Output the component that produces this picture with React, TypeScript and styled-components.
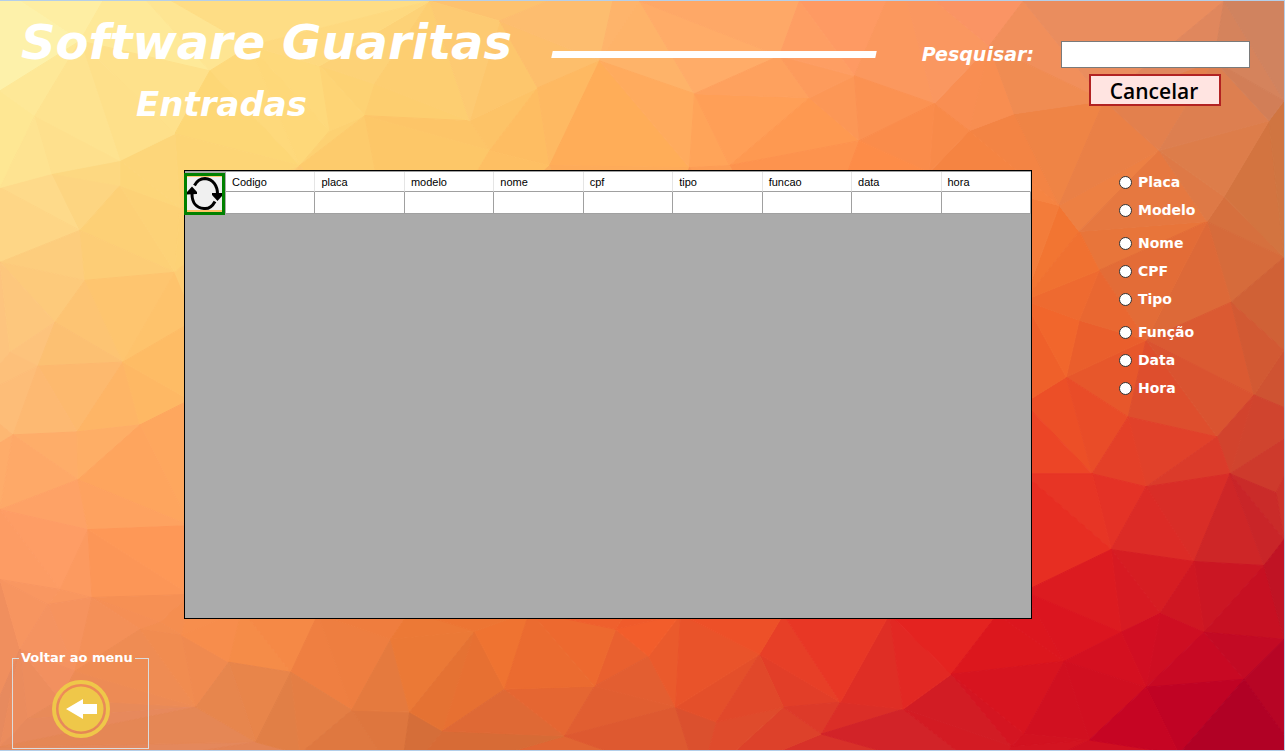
import React, { useMemo } from "react";
import styled, { createGlobalStyle } from "styled-components";

type Point = [number, number];
type Swatch = [number, number, string];

const GlobalStyle = createGlobalStyle`
  *, *::before, *::after { box-sizing: border-box; }
  html, body { margin: 0; padding: 0; }
  body { font-family: "DejaVu Sans", Verdana, sans-serif; color: #fff; }
`;

/* ---------- low-poly wallpaper ---------- */

const ART_W = 1285;
const ART_H = 751;

const vertices: Point[] = [
  [-40, -40], [1325, -40], [1325, 791], [-40, 791], [120, -30], [620, -30], [900, -30], [-30, 400], [1315, 420], [400, 785], [700, 785], [1000, 785],
  [0, 90], [0, 187], [52, 173], [120, 185], [80, 230], [0, 262], [180, 207], [85, 280], [55, 322], [10, 352], [38, 366], [123, 362], [175, 272],
  [13, 435], [77, 432], [0, 443], [140, 425], [190, 400], [78, 480], [88, 530], [0, 510], [0, 580], [60, 590], [48, 605], [92, 598], [190, 526],
  [190, 595], [160, 623], [20, 650], [140, 630], [195, 320], [27, 720], [60, 700], [75, 672], [0, 748],
  [182, 636], [229, 663], [291, 673], [196, 708], [242, 610], [318, 615], [256, 743], [352, 711], [300, 755], [391, 640], [410, 713], [443, 732],
  [475, 632], [505, 690], [616, 630], [595, 687], [565, 737], [649, 657], [676, 708], [760, 655], [784, 708], [841, 703], [822, 735], [904, 710],
  [952, 675], [1012, 747], [717, 723], [784, 615], [890, 615], [681, 615], [998, 615], [530, 612], [410, 612],
  [1060, 205], [1080, 231], [1208, 221], [1225, 196], [1285, 257], [1232, 302], [1067, 377], [1025, 403], [1129, 417], [1147, 340], [1255, 395],
  [1218, 437], [1285, 350], [1093, 474], [1147, 487], [1231, 474], [1277, 493], [1025, 474], [1112, 550], [1195, 562], [1265, 566], [1161, 614],
  [1205, 633], [1122, 633], [1065, 662], [1025, 592], [1147, 688], [1285, 540], [1245, 680], [1285, 640], [1180, 755], [1090, 741], [1025, 735],
  [1080, 320], [1025, 300], [1100, 270],
  [80, 40], [210, 70], [320, 65], [375, 83], [250, 45], [300, 165], [365, 115], [470, 120], [538, 87], [550, 165], [490, 150], [330, 130],
  [175, 133], [35, 115], [120, 160], [500, 20], [430, 0], [640, 0], [600, 60], [695, 93], [690, 167], [730, 165], [810, 97], [860, 140],
  [780, 55], [800, 0], [855, 75], [970, 130], [935, 103], [1015, 113], [1024, 0], [990, 45], [1105, 100], [1160, 150], [1215, 60], [1285, 100],
  [1225, 0], [1270, 120], [930, 172], [400, 300], [600, 400], [800, 300], [700, 500], [350, 480], [900, 450],
];

const swatches: Swatch[] = [
  [10, 15, "#fdf3ae"], [60, 60, "#fee998"], [100, 15, "#feee9f"], [200, 20, "#fee795"], [20, 130, "#fee893"], [120, 100, "#fee08a"],
  [200, 60, "#fee08a"], [300, 30, "#fedc82"], [300, 100, "#fed97a"], [250, 140, "#fdd572"], [400, 20, "#fdd37c"], [400, 90, "#fdd070"],
  [380, 140, "#fdc968"], [480, 50, "#fdcb73"], [480, 140, "#fec062"], [500, 100, "#fdc569"], [560, 20, "#fdbf70"], [580, 100, "#feba62"],
  [620, 60, "#feb568"], [570, 150, "#ffb358"], [640, 20, "#feb36c"], [630, 150, "#ffa552"], [700, 20, "#ffae6c"], [700, 120, "#ffa458"],
  [680, 60, "#ffb06a"], [740, 60, "#fea564"], [800, 40, "#fe9f64"], [780, 120, "#ff9a50"], [850, 20, "#fe9a64"], [850, 90, "#fb9858"],
  [850, 155, "#ff8c45"], [920, 40, "#fa9a60"], [920, 120, "#fa8c4a"], [980, 30, "#fb9468"], [980, 90, "#f98f52"], [980, 150, "#f58340"],
  [1050, 20, "#ef9160"], [1060, 90, "#ef8c52"], [1060, 150, "#ee8444"], [1130, 30, "#ea8e60"], [1130, 120, "#e67e48"], [1200, 40, "#df8860"],
  [1200, 110, "#de8050"], [1270, 40, "#cf8460"], [1270, 90, "#d07e58"], [1200, 160, "#e07f4b"], [1270, 160, "#cf7440"],
  [1045, 190, "#f5843f"], [1045, 260, "#f4742e"], [1100, 200, "#ee8145"], [1130, 240, "#e87539"], [1230, 230, "#d66e3e"], [1265, 210, "#d2743f"],
  [1190, 260, "#de6d3a"], [1050, 330, "#f4682c"], [1100, 300, "#ea6931"], [1160, 330, "#e26433"], [1200, 350, "#dd5a32"], [1265, 300, "#cf6236"],
  [1265, 370, "#cb5733"], [1240, 360, "#d75a33"], [1045, 380, "#ef5f29"], [1100, 360, "#e95b2b"], [1170, 400, "#dc4f2d"], [1070, 420, "#ec4f27"],
  [1160, 440, "#e3432b"], [1110, 430, "#e84b28"], [1260, 430, "#d0452e"], [1040, 450, "#ee4425"], [1150, 470, "#e13a29"], [1260, 470, "#cd392c"],
  [1060, 510, "#e83525"], [1040, 530, "#e92d20"], [1120, 500, "#e53126"], [1170, 520, "#dc2b26"], [1230, 520, "#d02627"], [1270, 520, "#c62628"],
  [1090, 590, "#dd1b20"], [1050, 620, "#dc141e"], [1150, 580, "#d71d22"], [1190, 600, "#cf1822"], [1230, 620, "#c80f21"], [1275, 570, "#bd1024"],
  [1100, 650, "#d5101f"], [1150, 650, "#d00b22"], [1220, 660, "#c80724"], [1045, 650, "#de171d"], [1060, 700, "#cf0e20"], [1160, 710, "#c40224"],
  [1250, 730, "#ae0025"], [1270, 670, "#b80525"], [1200, 730, "#bb0024"],
  [20, 180, "#fee493"], [30, 215, "#fed888"], [150, 190, "#fdd678"], [60, 240, "#fdcd7d"], [130, 240, "#fdd075"], [30, 280, "#fdcb7c"],
  [90, 310, "#fdc775"], [140, 310, "#fec46c"], [20, 340, "#fdc581"], [80, 345, "#fcbf70"], [25, 390, "#fdbf7a"], [70, 400, "#fdb86e"],
  [130, 400, "#feb763"], [160, 370, "#febc64"], [110, 440, "#feae66"], [40, 460, "#feaa68"], [150, 470, "#ffa25b"], [40, 530, "#ff9f68"],
  [100, 500, "#fea462"], [60, 560, "#fe9b62"], [140, 560, "#ff9856"], [30, 620, "#f79560"], [130, 615, "#f58f55"], [40, 700, "#ec8c5c"],
  [100, 740, "#e0865c"], [20, 740, "#e5895f"], [170, 640, "#f28d50"], [130, 690, "#ee8b52"], [175, 720, "#e38856"], [60, 660, "#f69262"],
  [205, 630, "#fa8e4b"], [190, 680, "#ef8a50"], [260, 640, "#f78d47"], [240, 710, "#e6854a"], [195, 740, "#df8055"], [330, 640, "#f8803e"],
  [290, 730, "#df7d45"], [340, 670, "#eb7e42"], [430, 650, "#ed7a35"], [390, 690, "#e57a3e"], [370, 730, "#dd7740"], [460, 700, "#e8702f"],
  [440, 742, "#cd6938"], [510, 640, "#f17431"], [520, 720, "#dc6836"], [570, 650, "#ee6a2e"], [560, 700, "#e76632"], [640, 690, "#e15f33"],
  [620, 730, "#de5c30"], [650, 630, "#f55e2a"], [720, 635, "#f05428"], [710, 680, "#e6522a"], [690, 740, "#d9502f"], [750, 700, "#e0482a"],
  [800, 680, "#e33d28"], [800, 630, "#ee4024"], [850, 640, "#e93524"], [800, 730, "#d93b2a"], [870, 700, "#dc2e26"], [910, 640, "#e82c22"],
  [950, 640, "#e52220"], [890, 740, "#d0222a"], [950, 715, "#cf1d25"], [1000, 650, "#dd161c"], [990, 700, "#d41220"],
];

const palette = swatches.map(([x, y, hex]) => ({
  x,
  y,
  rgb: [1, 3, 5].map((i) => parseInt(hex.slice(i, i + 2), 16)),
}));

function colorAt(x: number, y: number): string {
  let total = 0;
  const sum = [0, 0, 0];
  for (const s of palette) {
    const d2 = (s.x - x) ** 2 + (s.y - y) ** 2 + 1200;
    const w = 1 / (d2 * d2);
    total += w;
    s.rgb.forEach((c, i) => (sum[i] += c * w));
  }
  return `rgb(${sum.map((c) => Math.round(c / total)).join(",")})`;
}

/* Bowyer-Watson triangulation of the wallpaper's vertices. */
function triangulate(source: Point[]): Point[][] {
  const pts: Point[] = [...source, [-9000, -9000], [9000, -9000], [0, 12000]];
  const n = source.length;
  const circle = (a: number, b: number, c: number) => {
    const [ax, ay] = pts[a];
    const [bx, by] = pts[b];
    const [cx, cy] = pts[c];
    const d = 2 * (ax * (by - cy) + bx * (cy - ay) + cx * (ay - by));
    const a2 = ax * ax + ay * ay;
    const b2 = bx * bx + by * by;
    const c2 = cx * cx + cy * cy;
    const x = (a2 * (by - cy) + b2 * (cy - ay) + c2 * (ay - by)) / d;
    const y = (a2 * (cx - bx) + b2 * (ax - cx) + c2 * (bx - ax)) / d;
    return { v: [a, b, c], x, y, r: (ax - x) ** 2 + (ay - y) ** 2 };
  };
  let tris = [circle(n, n + 1, n + 2)];
  for (let i = 0; i < n; i++) {
    const [px, py] = pts[i];
    const edges = new Map<string, number[]>();
    tris = tris.filter((t) => {
      if ((px - t.x) ** 2 + (py - t.y) ** 2 >= t.r) return true;
      [[0, 1], [1, 2], [2, 0]].forEach(([p, q]) => {
        const e = [t.v[p], t.v[q]].sort((m, k) => m - k);
        const key = e.join("-");
        if (edges.has(key)) edges.delete(key);
        else edges.set(key, e);
      });
      return false;
    });
    edges.forEach(([a, b]) => tris.push(circle(a, b, i)));
  }
  return tris.filter((t) => t.v.every((k) => k < n)).map((t) => t.v.map((k) => pts[k]));
}

const Art = styled.svg`
  position: absolute;
  inset: 0;
  width: 100%;
  height: 100%;
  z-index: -1;
`;

function Wallpaper() {
  const facets = useMemo(
    () =>
      triangulate(vertices).map((t) => ({
        points: t.map((p) => p.join(",")).join(" "),
        fill: colorAt((t[0][0] + t[1][0] + t[2][0]) / 3, (t[0][1] + t[1][1] + t[2][1]) / 3),
      })),
    []
  );
  return (
    <Art viewBox={`0 0 ${ART_W} ${ART_H}`} preserveAspectRatio="none" aria-hidden="true">
      {facets.map((f) => (
        <polygon key={f.points} points={f.points} fill={f.fill} stroke={f.fill} strokeWidth={1} />
      ))}
    </Art>
  );
}

/* ---------- window ---------- */

const Window = styled.div`
  position: relative;
  isolation: isolate;
  display: flex;
  flex-direction: column;
  min-height: 100vh;
  overflow: hidden;
  border: 1px solid #b4cfea;
  border-left: 0;
`;

const Header = styled.header`
  display: flex;
  align-items: flex-start;
  height: 169px;
  padding: 13px 34px 0 21px;
`;

const Title = styled.h1`
  margin: 0;
  font-size: 48px;
  line-height: 56px;
  font-style: italic;
  font-weight: 700;
  white-space: nowrap;
`;

const Subtitle = styled.h2`
  margin: 14px 0 0 115px;
  font-size: 34px;
  line-height: 40px;
  font-style: italic;
  font-weight: 700;
`;

const Rule = styled.div`
  flex: 1;
  height: 7px;
  margin: 37px 46px 0 40px;
  background: #fff;
  transform: skewX(-12deg);
`;

const Search = styled.form`
  display: grid;
  grid-template-columns: auto 189px;
  column-gap: 27px;
  row-gap: 6px;
  align-items: center;
  padding-top: 27px;
`;

const SearchLabel = styled.label`
  padding-bottom: 2px;
  font-size: 19px;
  line-height: 24px;
  font-style: italic;
  font-weight: 700;
`;

const SearchInput = styled.input`
  width: 100%;
  height: 27px;
  padding: 2px 4px;
  border: 1px solid #7a7a7a;
  border-radius: 0;
  background: #fff;
  font: 16px "DejaVu Sans", sans-serif;
`;

const CancelButton = styled.button`
  grid-column: 2;
  width: 132px;
  height: 32px;
  margin-left: 28px;
  padding: 2px 2px 0 0;
  border: 2px solid #b22222;
  background: #ffe4e1;
  color: #000;
  font: 600 21px/24px "Open Sans", sans-serif;
`;

const Main = styled.main`
  flex: 1;
  display: flex;
  padding-left: 184px;
`;

const Grid = styled.section`
  flex: 1;
  min-height: 440px;
  border: 1px solid #000;
  background: #ababab;
`;

const Table = styled.table`
  width: 100%;
  table-layout: fixed;
  border-collapse: separate;
  border-spacing: 0;
  border-top: 1px solid #a0a0a0;
  color: #000;
  font: 11px/14px "Liberation Sans", Arial, sans-serif;
`;

const CornerCell = styled.td`
  position: relative;
  width: 41px;
  padding: 0;
`;

const HeadCell = styled.th`
  height: 20px;
  padding: 0 6px;
  border-right: 1px solid #e5e5e5;
  border-bottom: 1px solid #a0a0a0;
  background: #fff;
  font-weight: 400;
  text-align: left;
`;

const Cell = styled.td`
  height: 22px;
  padding: 0;
  border-right: 1px solid #a0a0a0;
  border-bottom: 1px solid #a0a0a0;
  background: #fff;
`;

const RefreshButton = styled.button`
  position: absolute;
  top: 1px;
  left: -1px;
  width: 41px;
  height: 42px;
  padding: 0;
  border: 3px solid #008000;
  background: linear-gradient(#fdcb72 1px, #f0f0f0 1px, #f0f0f0 34px, #fdc566 34px);

  svg { display: block; width: 35px; height: 36px; }
`;

const Filters = styled.aside`
  display: flex;
  flex-direction: column;
  gap: 9px;
  width: 252px;
  padding-left: 87px;
`;

const FilterGroup = styled.div`
  display: flex;
  flex-direction: column;
  align-items: flex-start;
  gap: 4px;
`;

const FilterOption = styled.label`
  display: flex;
  align-items: center;
  gap: 6px;
  font-size: 14px;
  line-height: 24px;
  font-weight: 700;

  input {
    appearance: none;
    width: 13px;
    height: 13px;
    margin: 0;
    border: 1px solid #333;
    border-radius: 50%;
    background: #fff;
  }

  input:checked { background: radial-gradient(#333 3px, #fff 4px); }
`;

const Footer = styled.footer`
  padding: 31px 0 1px 12px;
`;

const MenuBox = styled.fieldset`
  width: 137px;
  height: 99px;
  margin: 0;
  padding: 14px 0 0;
  border: 1px solid #dcdcdc;

  legend {
    margin-left: 6px;
    padding: 0 2px;
    font-size: 13px;
    line-height: 16px;
    font-weight: 700;
    white-space: nowrap;
  }
`;

const BackButton = styled.button`
  display: block;
  width: 58px;
  height: 58px;
  margin: 0 auto;
  padding: 0;
  border: 0;
  border-radius: 50%;
  background: none;

  svg { display: block; }
`;

const columns = ["Codigo", "placa", "modelo", "nome", "cpf", "tipo", "funcao", "data", "hora"];
const filterGroups = [
  ["Placa", "Modelo"],
  ["Nome", "CPF", "Tipo"],
  ["Função", "Data", "Hora"],
];

function RefreshIcon() {
  return (
    <svg viewBox="0 0 35 36" fill="none" aria-hidden="true">
      <path d="M7.500 9.500 C10 4.500 14 2.500 18 2.500 C26 3 30.500 10 30.500 18" stroke="#000" strokeWidth="3" />
      <path d="M28 25.500 C25 31 21 33 17 32.500 C9 32 5 26 5 18" stroke="#000" strokeWidth="3" />
      <path d="M25 17 L35 17 V20 L30.500 25 L25 19 Z" fill="#000" />
      <path d="M10 18 L0 18.500 V16 L5 10.500 L10 16 Z" fill="#000" />
    </svg>
  );
}

function BackIcon() {
  return (
    <svg width="58" height="58" viewBox="0 0 58 58" aria-hidden="true">
      <circle cx="29" cy="29" r="27" fill="none" stroke="#efc749" strokeWidth="4" />
      <circle cx="29" cy="29" r="22.500" fill="#efc749" />
      <path d="M14 29 L31 19 V24 H45 V34 H31 V39 Z" fill="#fff" />
    </svg>
  );
}

export default function App() {
  return (
    <Window>
      <GlobalStyle />
      <Wallpaper />
      <Header>
        <div>
          <Title>Software Guaritas</Title>
          <Subtitle>Entradas</Subtitle>
        </div>
        <Rule />
        <Search onSubmit={(e) => e.preventDefault()}>
          <SearchLabel htmlFor="search">Pesquisar:</SearchLabel>
          <SearchInput id="search" type="text" />
          <CancelButton type="button">Cancelar</CancelButton>
        </Search>
      </Header>
      <Main>
        <Grid>
          <Table>
            <thead>
              <tr>
                <CornerCell rowSpan={2}>
                  <RefreshButton type="button" aria-label="Atualizar">
                    <RefreshIcon />
                  </RefreshButton>
                </CornerCell>
                {columns.map((c) => (
                  <HeadCell key={c} scope="col">{c}</HeadCell>
                ))}
              </tr>
              <tr>
                {columns.map((c) => (
                  <Cell key={c} />
                ))}
              </tr>
            </thead>
          </Table>
        </Grid>
        <Filters>
          {filterGroups.map((group) => (
            <FilterGroup key={group[0]}>
              {group.map((name) => (
                <FilterOption key={name}>
                  <input type="radio" name="filter" value={name} />
                  {name}
                </FilterOption>
              ))}
            </FilterGroup>
          ))}
        </Filters>
      </Main>
      <Footer>
        <MenuBox>
          <legend>Voltar ao menu</legend>
          <BackButton type="button" aria-label="Voltar ao menu">
            <BackIcon />
          </BackButton>
        </MenuBox>
      </Footer>
    </Window>
  );
}
